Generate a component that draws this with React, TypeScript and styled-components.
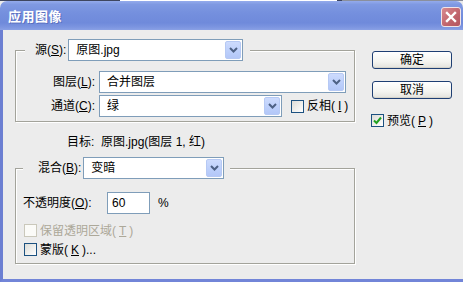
import React from "react";
import styled, { createGlobalStyle } from "styled-components";

const GlobalStyle = createGlobalStyle`
  html, body { margin: 0; padding: 0; background: #ececec; }
  body {
    font-family: "Liberation Sans", "Noto Sans CJK SC", sans-serif;
    font-size: 12px;
    line-height: 16px;
    color: #000;
  }
  * { box-sizing: border-box; }
`;

const Window = styled.div`
  width: 463px;
  height: 282px;
  display: flex;
  flex-direction: column;
  overflow: hidden;
  background: #ececec;
`;

const DesktopStrip = styled.div`
  height: 1px;
  flex: none;
  background: linear-gradient(
    to right,
    #3e4660 0 120px,
    #ffffff 120px 337px,
    #3e4660 337px 342px,
    #8a8f9c 342px
  );
`;

const TitleBar = styled.div`
  height: 29px;
  flex: none;
  display: flex;
  align-items: center;
  justify-content: space-between;
  padding: 0 2px 0 8px;
  border-radius: 7px 7px 0 0;
  background: linear-gradient(
    to bottom,
    #94abec 0%,
    #7f99e2 12%,
    #7590de 40%,
    #6f8adb 75%,
    #7c95e0 90%,
    #8aa1e5 100%
  );
`;

const TitleText = styled.span`
  color: #fff;
  font-family: "Noto Sans CJK SC", sans-serif;
  font-weight: bold;
  font-size: 13px;
  letter-spacing: 0.5px;
  text-shadow: 1px 1px 0 #5a70c0;
`;

const CloseButton = styled.div`
  width: 20px;
  height: 20px;
  margin-top: 2px;
  border: 1px solid #f2e4e6;
  border-radius: 3px;
  background: linear-gradient(135deg, #d98a90, #c0636b 60%, #b45560);
  display: flex;
  align-items: center;
  justify-content: center;
`;

const Body = styled.div`
  flex: 1;
  display: flex;
  border-left: 3px solid #6c7fd2;
  border-bottom: 3px solid #7285d8;
  padding: 9px 0 0 12px;
  gap: 17px;
`;

const LeftColumn = styled.div`
  width: 340px;
  display: flex;
  flex-direction: column;
`;

const RightColumn = styled.div`
  display: flex;
  flex-direction: column;
  padding-top: 12px;
`;

const Group = styled.fieldset<{ $pad: string }>`
  margin: 0;
  min-width: 0;
  padding: ${(p) => p.$pad};
  border: 1px solid #a3a39b;
  box-shadow: inset 1px 1px 0 #fff, 1px 1px 0 #fff;
`;

const Legend = styled.legend<{ $offset: number; $padL: number; $padR: number }>`
  margin-left: ${(p) => p.$offset}px;
  padding: 0 ${(p) => p.$padR}px 0 ${(p) => p.$padL}px;
  background: #ececec;
  display: flex;
  align-items: center;
  gap: 2px;
`;

const Label = styled.span<{ $right?: boolean }>`
  white-space: nowrap;
  text-align: ${(p) => (p.$right ? "right" : "left")};
`;

const ComboBox = styled.div<{ $w: number }>`
  width: ${(p) => p.$w}px;
  height: 22px;
  border: 1px solid #7f9db9;
  background: #fff;
  display: flex;
  align-items: center;
  justify-content: space-between;
  padding: 1px 1px 1px 7px;
`;

const ComboButton = styled.div`
  width: 16px;
  height: 18px;
  border: 1px solid #b6c9f4;
  border-radius: 2px;
  background: linear-gradient(to bottom, #cddbfd, #bccffb 60%, #b3c7f8);
  display: flex;
  align-items: center;
  justify-content: center;
`;

const LayerGrid = styled.div`
  display: grid;
  grid-template-columns: 79px auto;
  column-gap: 4px;
  row-gap: 2px;
  align-items: center;
  justify-content: start;
`;

const InlineRow = styled.div`
  display: flex;
  align-items: center;
  gap: 8px;
`;

const TargetLine = styled.div`
  margin: 12px 0 0 52px;
  height: 16px;
  white-space: nowrap;
`;

const BlendGroupWrap = styled.div`
  margin-top: 7px;
`;

const OpacityRow = styled.div`
  display: grid;
  grid-template-columns: 76px 43px auto;
  column-gap: 8px;
  align-items: center;
  height: 22px;
`;

const TextInput = styled.div`
  width: 43px;
  height: 22px;
  border: 1px solid #7f9db9;
  background: #fff;
  padding: 2px 0 0 4px;
`;

const CheckRow = styled.label<{ $disabled?: boolean; $mt?: number }>`
  display: flex;
  align-items: center;
  gap: 3px;
  height: 19px;
  margin-top: ${(p) => p.$mt ?? 0}px;
  padding-left: 1px;
  color: ${(p) => (p.$disabled ? "#aca899" : "#000")};
  white-space: nowrap;
`;

const Box = styled.span<{ $disabled?: boolean }>`
  width: 13px;
  height: 13px;
  flex: none;
  border: 1px solid ${(p) => (p.$disabled ? "#cac8bb" : "#1c5180")};
  background: ${(p) =>
    p.$disabled ? "#fbfbf8" : "linear-gradient(135deg, #dcdcd7, #ffffff)"};
  display: flex;
  align-items: center;
  justify-content: center;
`;

const PushButton = styled.div<{ $mt?: number }>`
  width: 80px;
  height: 18px;
  margin-top: ${(p) => p.$mt ?? 0}px;
  border: 1px solid #1f3f73;
  border-radius: 3px;
  background: linear-gradient(to bottom, #ffffff, #f4f4f0 60%, #e3e2dc);
  box-shadow: inset 0 -1px 0 #d6d4cb;
  display: flex;
  align-items: center;
  justify-content: center;
  line-height: 14px;
`;

const PreviewRow = styled(CheckRow)`
  padding-left: 0;
  margin-left: -1px;
`;

const Chevron = () => (
  <svg width="9" height="6" viewBox="0 0 9 6">
    <path d="M1 1 L4.5 4.5 L8 1" fill="none" stroke="#4d6185" strokeWidth="2" />
  </svg>
);

const CloseX = () => (
  <svg width="12" height="12" viewBox="0 0 12 12">
    <path d="M2 2 L10 10 M10 2 L2 10" stroke="#fff" strokeWidth="2.4" strokeLinecap="square" />
  </svg>
);

const Check = () => (
  <svg width="9" height="9" viewBox="0 0 9 9">
    <path d="M1 4.5 L3.5 7 L8 1.5" fill="none" stroke="#21a121" strokeWidth="2" />
  </svg>
);

const Combo = ({ w, text }: { w: number; text: string }) => (
  <ComboBox $w={w}>
    <span>{text}</span>
    <ComboButton>
      <Chevron />
    </ComboButton>
  </ComboBox>
);

export default function App() {
  return (
    <>
      <GlobalStyle />
      <Window>
        <DesktopStrip />
        <TitleBar>
          <TitleText>应用图像</TitleText>
          <CloseButton>
            <CloseX />
          </CloseButton>
        </TitleBar>
        <Body>
          <LeftColumn>
            <Group $pad="10px 8px 4px 0">
              <Legend $offset={9} $padL={10} $padR={7}>
                <Label>
                  源(<u>S</u>):
                </Label>
                <Combo w={175} text="原图.jpg" />
              </Legend>
              <LayerGrid>
                <Label $right>
                  图层(<u>L</u>):
                </Label>
                <Combo w={247} text="合并图层" />
                <Label $right>
                  通道(<u>C</u>):
                </Label>
                <InlineRow>
                  <Combo w={183} text="绿" />
                  <CheckRow>
                    <Box />
                    反相(<u>I</u>)
                  </CheckRow>
                </InlineRow>
              </LayerGrid>
            </Group>
            <TargetLine>目标:&nbsp; 原图.jpg(图层 1, 红)</TargetLine>
            <BlendGroupWrap>
              <Group $pad="13px 8px 4px 7px">
                <Legend $offset={0} $padL={15} $padR={6}>
                  <Label>
                    混合(<u>B</u>):
                  </Label>
                  <Combo w={141} text="变暗" />
                </Legend>
                <OpacityRow>
                  <Label>
                    不透明度(<u>O</u>):
                  </Label>
                  <TextInput>60</TextInput>
                  <span>%</span>
                </OpacityRow>
                <CheckRow $disabled $mt={7}>
                  <Box $disabled />
                  保留透明区域(<u>T</u>)
                </CheckRow>
                <CheckRow>
                  <Box />
                  蒙版(<u>K</u>)...
                </CheckRow>
              </Group>
            </BlendGroupWrap>
          </LeftColumn>
          <RightColumn>
            <PushButton>确定</PushButton>
            <PushButton $mt={12}>取消</PushButton>
            <PreviewRow $mt={12}>
              <Box>
                <Check />
              </Box>
              预览(<u>P</u>)
            </PreviewRow>
          </RightColumn>
        </Body>
      </Window>
    </>
  );
}
